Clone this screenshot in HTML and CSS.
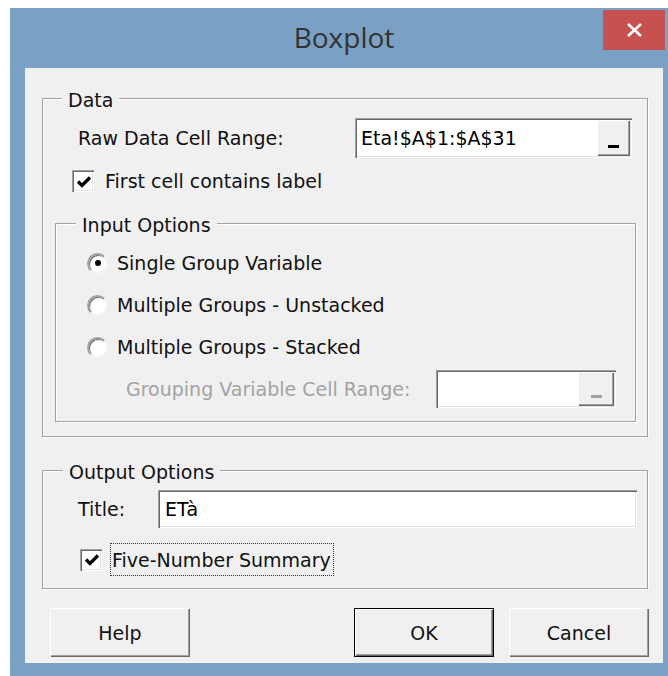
FILE: index.html
```html
<!DOCTYPE html>
<html lang="en">
<head>
<meta charset="utf-8">
<title>Boxplot</title>
<link rel="stylesheet" href="styles.css">
</head>
<body>
<div class="window">
  <div class="titlebar">
    <div class="caption">Boxplot</div>
    <button class="close" type="button" aria-label="Close">
      <svg width="17" height="14" viewBox="0 0 17 14"><path d="M2 1 L15 13 M15 1 L2 13" stroke="#fff" stroke-width="2.6" fill="none"/></svg>
    </button>
  </div>

  <div class="client">
    <div class="group data">
      <span class="legend">Data</span>

      <div class="field-row raw-row">
        <span class="field-label raw-label">Raw Data Cell Range:</span>
        <div class="edit ref-edit raw-edit">
          <span class="edit-text">Eta!$A$1:$A$31</span>
          <span class="picker"><i class="picker-bar"></i></span>
        </div>
      </div>

      <div class="check-row label-check">
        <span class="check">
          <svg width="16" height="14" viewBox="0 0 16 14"><path d="M2 6.5 L6 10.5 L14 2.5" stroke="#000" stroke-width="3.2" fill="none"/></svg>
        </span>
        <span class="check-text">First cell contains label</span>
      </div>

      <div class="group input-options">
        <span class="legend">Input Options</span>
        <div class="radio-row first-radio"><span class="radio on"></span><span class="radio-text">Single Group Variable</span></div>
        <div class="radio-row"><span class="radio"></span><span class="radio-text">Multiple Groups - Unstacked</span></div>
        <div class="radio-row"><span class="radio"></span><span class="radio-text">Multiple Groups - Stacked</span></div>

        <div class="field-row grouping-row">
          <span class="field-label grouping-label disabled">Grouping Variable Cell Range:</span>
          <div class="edit ref-edit grouping-edit">
            <span class="edit-text"></span>
            <span class="picker"><i class="picker-bar dim"></i></span>
          </div>
        </div>
      </div>
    </div>

    <div class="group output">
      <span class="legend">Output Options</span>
      <div class="field-row title-row">
        <span class="field-label title-label">Title:</span>
        <div class="edit title-edit"><span class="edit-text">ETà</span></div>
      </div>
      <div class="check-row summary-check">
        <span class="check">
          <svg width="16" height="14" viewBox="0 0 16 14"><path d="M2 6.5 L6 10.5 L14 2.5" stroke="#000" stroke-width="3.2" fill="none"/></svg>
        </span>
        <span class="check-text focused">Five-Number Summary</span>
      </div>
    </div>

    <div class="buttons">
      <button class="btn" type="button">Help</button>
      <span class="spacer"></span>
      <button class="btn default" type="button">OK</button>
      <button class="btn cancel" type="button">Cancel</button>
    </div>
  </div>
</div>
</body>
</html>
```

FILE: styles.css
```css
html, body {
  margin: 0;
  background: #fff;
}

body {
  font-family: "DejaVu Sans", sans-serif;
  font-size: 19px;
  color: #111;
}

/* dialog frame */
.window {
  margin: 8px 0 0 10px;
  width: 658px;
  height: 668px;
  background: #7aa0c3;
  display: flex;
  flex-direction: column;
}

.titlebar {
  height: 60px;
  display: flex;
  align-items: flex-start;
  flex: none;
}

.caption {
  flex: 1;
  margin-top: 9px;
  padding-left: 75px;
  line-height: 40px;
  text-align: center;
  font-family: "Open Sans", sans-serif;
  font-size: 28px;
  color: #333;
}

.close {
  width: 62px;
  height: 40px;
  margin: 2px 3px 0 0;
  padding: 0;
  border: 0;
  background: #c75050;
  display: flex;
  align-items: center;
  justify-content: center;
}

.client {
  margin: 0 5px 0 15px;
  height: 595px;
  box-sizing: border-box;
  background: #f0f0f0;
  padding: 30px 0 0 17px;
}

/* etched group boxes */
.group {
  position: relative;
  box-sizing: border-box;
  border: 1px solid #a0a0a0;
  box-shadow: 1px 1px 0 #fff, inset 1px 1px 0 #fff;
}

.legend {
  position: absolute;
  top: -10px;
  left: 19px;
  padding: 0 6px;
  line-height: 22px;
  background: #f0f0f0;
}

.data {
  width: 606px;
  height: 339px;
  padding-top: 19px;
}

.input-options {
  width: 581px;
  height: 199px;
  margin: 30px 0 0 12px;
  padding-top: 27px;
}

.input-options .legend {
  left: 20px;
}

.output {
  width: 606px;
  height: 119px;
  margin-top: 33px;
  padding-top: 19px;
}

.output .legend {
  left: 20px;
}

/* label + edit rows */
.field-row {
  display: flex;
  align-items: center;
}

.field-label {
  flex: none;
  white-space: nowrap;
}

.disabled {
  color: #a3a3a3;
}

.raw-row {
  height: 40px;
  padding-left: 35px;
}

.raw-label {
  width: 277px;
}

.grouping-row {
  height: 38px;
  margin-top: 11px;
  padding-left: 70px;
}

.grouping-label {
  width: 310px;
}

.title-row {
  height: 38px;
  padding-left: 35px;
}

.title-label {
  width: 80px;
}

/* sunken text boxes */
.edit {
  box-sizing: border-box;
  height: 100%;
  background: #fff;
  display: flex;
  align-items: center;
  padding: 2px;
  box-shadow: inset 1px 1px 0 #a0a0a0, inset 2px 2px 0 #696969,
              inset -1px -1px 0 #fff, inset -2px -2px 0 #e3e3e3;
}

.edit-text {
  flex: 1;
  padding-left: 4px;
  white-space: nowrap;
  color: #000;
}

.raw-edit {
  width: 277px;
}

.grouping-edit {
  width: 180px;
}

.title-edit {
  width: 479px;
}

.title-edit .edit-text {
  padding-left: 5px;
}

/* small "_" range picker button */
.picker {
  flex: none;
  align-self: stretch;
  width: 33px;
  background: #f0f0f0;
  display: flex;
  align-items: flex-end;
  justify-content: center;
  padding-bottom: 8px;
  box-sizing: border-box;
  box-shadow: inset 1px 1px 0 #fff, inset -1px -1px 0 #696969, inset -2px -2px 0 #a0a0a0;
}

.grouping-edit .picker {
  width: 36px;
}

.picker-bar {
  display: block;
  width: 11px;
  height: 3px;
  background: #000;
}

.picker-bar.dim {
  background: #a0a0a0;
}

/* check boxes */
.check-row {
  display: flex;
  align-items: center;
}

.check {
  flex: none;
  box-sizing: border-box;
  width: 22px;
  height: 22px;
  background: #fff;
  display: flex;
  align-items: center;
  justify-content: center;
  padding: 1px 0 0 1px;
  box-shadow: inset 1px 1px 0 #a0a0a0, inset 2px 2px 0 #696969,
              inset -1px -1px 0 #fff, inset -2px -2px 0 #e3e3e3;
}

.label-check {
  height: 24px;
  margin-top: 11px;
  padding-left: 29px;
}

.label-check .check-text {
  margin-left: 11px;
}

.summary-check {
  height: 33px;
  margin-top: 15px;
  padding-left: 37px;
}

.summary-check .check-text {
  margin-left: 8px;
}

.focused {
  box-sizing: border-box;
  height: 33px;
  display: flex;
  align-items: center;
  padding: 0 2px 0 1px;
  border: 1px dotted #333;
}

/* radio buttons */
.radio-row {
  display: flex;
  align-items: center;
  height: 24px;
  margin-top: 18px;
  padding-left: 31px;
}

.first-radio {
  margin-top: 0;
}

.radio {
  flex: none;
  box-sizing: border-box;
  width: 21px;
  height: 21px;
  border-radius: 50%;
  background: #fff;
  border: 2px solid;
  border-color: #a0a0a0 #f4f4f4 #f4f4f4 #a0a0a0;
  box-shadow: inset 1px 1px 0 #6a6a6a;
  display: flex;
  align-items: center;
  justify-content: center;
}

.radio.on::after {
  content: "";
  width: 6px;
  height: 6px;
  border-radius: 50%;
  background: #000;
}

.radio-text {
  margin-left: 9px;
}

/* dialog buttons */
.buttons {
  display: flex;
  width: 607px;
  box-sizing: border-box;
  padding-left: 8px;
  margin-top: 19px;
}

.spacer {
  flex: 1;
}

.btn {
  width: 140px;
  height: 49px;
  padding: 0;
  border: 0;
  background: #f0f0f0;
  font: inherit;
  color: #111;
  box-shadow: inset 1px 1px 0 #fff, inset -1px -1px 0 #696969,
              inset -2px -2px 0 #a0a0a0;
}

.btn.default {
  border: 1px solid #000;
  box-shadow: inset 1px 1px 0 #fff, inset -1px -1px 0 #696969,
              inset -2px -2px 0 #a0a0a0;
}

.btn.cancel {
  margin-left: 15px;
}
```
